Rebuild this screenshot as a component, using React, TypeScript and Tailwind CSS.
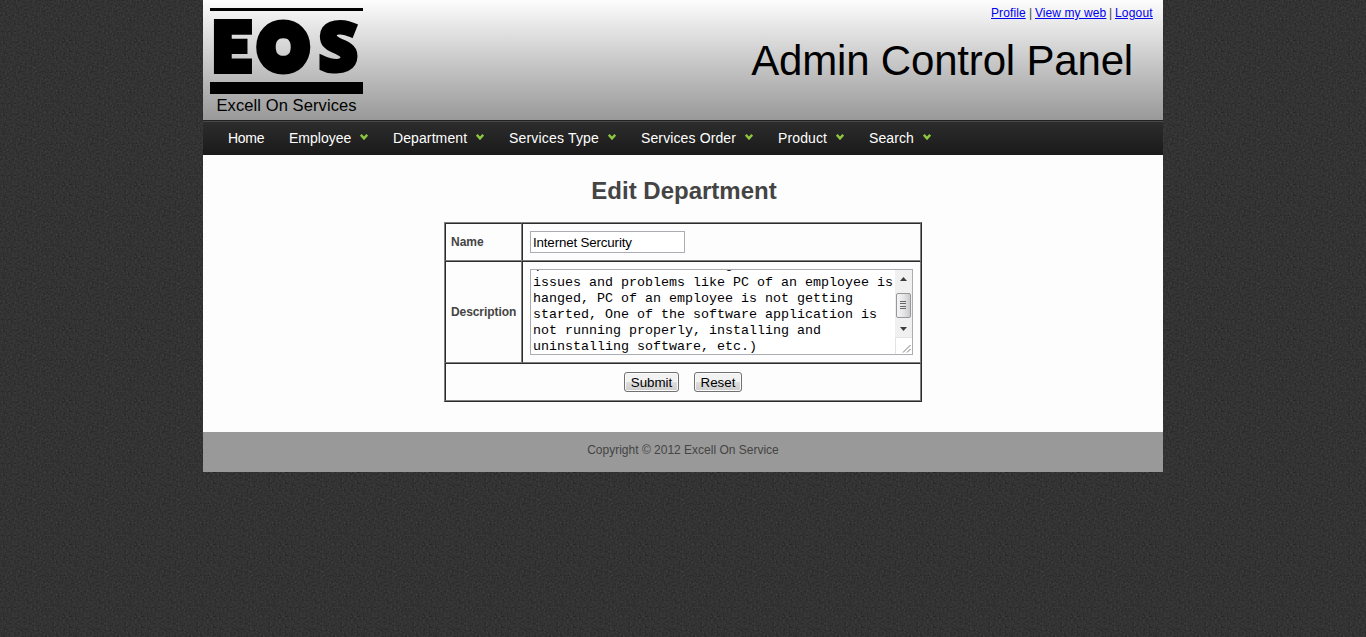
import React from "react";

const menu = [
  { label: "Home", width: "w-[36px]", spacing: "tracking-[-0.3px]", sub: false },
  { label: "Employee", width: "w-[79px]", spacing: "", sub: true },
  { label: "Department", width: "w-[91px]", spacing: "tracking-[0.1px]", sub: true },
  { label: "Services Type", width: "w-[107px]", spacing: "tracking-[0.18px]", sub: true },
  { label: "Services Order", width: "w-[112px]", spacing: "tracking-[0.12px]", sub: true },
  { label: "Product", width: "w-[66px]", spacing: "tracking-[0.12px]", sub: true },
  { label: "Search", width: "w-[62px]", spacing: "tracking-[0.1px]", sub: true },
];

const description = [
  "(It is used for resolving technical",
  "issues and problems like PC of an employee is",
  "hanged, PC of an employee is not getting",
  "started, One of the software application is",
  "not running properly, installing and",
  "uninstalling software, etc.)",
];

function Texture() {
  return (
    <svg className="absolute inset-0 h-full w-full" aria-hidden="true">
      <defs>
        <filter id="grain" x="0" y="0" width="100%" height="100%" colorInterpolationFilters="sRGB">
          <feTurbulence type="fractalNoise" baseFrequency="0.55" numOctaves="2" seed="4" />
          <feColorMatrix values="0.14 0 0 0 0.13  0.14 0 0 0 0.13  0.14 0 0 0 0.13  0 0 0 0 1" />
        </filter>
        <pattern id="tile" width="72" height="72" patternUnits="userSpaceOnUse">
          <rect width="72" height="72" filter="url(#grain)" />
        </pattern>
      </defs>
      <rect width="100%" height="100%" fill="url(#tile)" />
    </svg>
  );
}

function Logo() {
  return (
    <svg className="h-[120px] w-[170px] shrink-0" viewBox="0 0 170 120">
      <rect x="7" y="8" width="153" height="3" />
      <g fontFamily="Lato, sans-serif" fontWeight="900" stroke="#000">
        <text x="10" y="70" fontSize="65" strokeWidth="8">E</text>
        <text transform="translate(56.5 68.5) scale(0.96 1)" fontSize="61" strokeWidth="11">O</text>
        <text
          x="115.500"
          y="71.300"
          fontFamily="Open Sans, sans-serif"
          fontWeight="800"
          fontSize="68"
          strokeWidth="4"
        >
          S
        </text>
      </g>
      <rect x="7" y="82" width="153" height="12" />
      <text x="13.5" y="111" fontFamily="Liberation Sans, Arial, sans-serif" fontSize="16.500" textLength="140">
        Excell On Services
      </text>
    </svg>
  );
}

function Caret() {
  return (
    <svg className="mb-[3px] h-[6px] w-[8px]" viewBox="0 0 8 6">
      <path d="M0.8 0.8 L4 4.4 L7.2 0.8" fill="none" stroke="#8dc63f" strokeWidth="2.4" />
    </svg>
  );
}

function Scrollbar() {
  return (
    <div className="flex h-full w-[17px] shrink-0 flex-col">
      <svg className="h-[84px] w-[17px]" viewBox="0 0 17 84">
        <defs>
          <linearGradient id="thumb">
            <stop offset="0" stopColor="#f5f5f5" />
            <stop offset="0.5" stopColor="#e6e6e8" />
            <stop offset="1" stopColor="#c8c8cc" />
          </linearGradient>
        </defs>
        <rect width="17" height="67" fill="#f0f0f0" />
        <path d="M0.5 67V84M0 67.5H17" stroke="#e3e3e3" />
        <path d="M5 11L8.5 7L12 11Z" fill="#3c3c3c" />
        <path d="M5 57L8.5 61L12 57Z" fill="#3c3c3c" />
        <rect x="1.5" y="23.500" width="14" height="24" rx="1.500" fill="url(#thumb)" stroke="#979797" />
        <path d="M5 31.500H11M5 33.500H11M5 36.500H11M5 38.500H11" stroke="#666" />
        <path d="M8 82.500L15.500 75M12 82.500L15.500 79" stroke="#777" />
      </svg>
    </div>
  );
}

function FormButton({ label, width }: { label: string; width: string }) {
  return (
    <button
      className={`${width} h-[20px] rounded-[3px] border border-[#707070] bg-linear-to-b from-[#f2f2f2] from-50% via-[#dddddd] via-50% to-[#cfcfcf] pt-px text-[13.333px] leading-[18px] text-black shadow-[inset_0_0_0_1px_#fafafa]`}
    >
      {label}
    </button>
  );
}

const cell = "flex items-center border border-t-[#2c2c2c] border-l-[#2c2c2c] border-r-[#808080] border-b-[#808080]";

export default function App() {
  return (
    <div className="relative h-[637px] overflow-hidden bg-[#333333] font-['Liberation_Sans',Arial,sans-serif] text-[12px] text-[#444444]">
      <Texture />
      <div className="relative mx-auto w-[960px] bg-[#fdfdfd]">
        <header className="flex h-[120px] justify-between bg-linear-to-b from-[#fdfdfd] to-[#999999] text-black">
          <Logo />
          <div className="flex flex-col items-end">
            <div className="mt-[6px] mr-[10px] flex h-[14px] gap-[3px] leading-[14px]">
              <a href="#" className="w-[35px] tracking-[0.1px] whitespace-nowrap text-[#0000ee] underline">Profile</a>
              <span className="w-[3px] text-[#444444]">|</span>
              <a href="#" className="w-[71px] tracking-[0.08px] whitespace-nowrap text-[#0000ee] underline">View my web</a>
              <span className="w-[3px] text-[#444444]">|</span>
              <a href="#" className="w-[38px] tracking-[0.2px] whitespace-nowrap text-[#0000ee] underline">Logout</a>
            </div>
            <div className="mt-[17px] mr-[30px] text-[42px] leading-[48px] tracking-[-0.18px]">Admin Control Panel</div>
          </div>
        </header>
        <nav className="h-[35px] border-t border-[#222222] bg-linear-to-b from-[#2d2d2d] to-[#1a1a1a] text-[14px] text-white shadow-[inset_0_1px_0_#484848]">
          <ul className="flex h-[34px] gap-[25px] pl-[25px]">
            {menu.map((m) => (
              <li key={m.label} className={`${m.width} ${m.spacing} flex items-center justify-between whitespace-nowrap`}>
                <span>{m.label}</span>
                {m.sub && <Caret />}
              </li>
            ))}
          </ul>
        </nav>
        <main className="flex h-[277px] flex-col items-center">
          <h1 className="mt-[22px] h-[28px] pl-[2px] text-[24px] leading-[28px] font-bold">Edit Department</h1>
          <form
            className="mt-[17px] grid h-[180px] w-[478px] grid-cols-[77px_399px] grid-rows-[38px_102px_38px] border border-t-[#808080] border-r-[#2c2c2c] border-b-[#2c2c2c] border-l-[#808080]"
            onSubmit={(e) => e.preventDefault()}
          >
            <div className={`${cell} pl-[5px] font-bold`}>Name</div>
            <div className={`${cell} pl-[7px]`}>
              <input
                className="h-[22px] w-[155px] border border-[#abadb3] bg-white px-[2px] text-[13.333px] tracking-[-0.15px] text-black"
                defaultValue="Internet Sercurity"
              />
            </div>
            <div className={`${cell} pl-[5px] font-bold tracking-[-0.08px]`}>Description</div>
            <div className={`${cell} pl-[7px]`}>
              <div className="flex h-[86px] w-[383px] justify-between overflow-hidden border border-[#abadb3] bg-white">
                <div className="-mt-[13px] pl-[2px] font-['Liberation_Mono','Courier_New',monospace] text-[13.333px] leading-[16px] whitespace-pre text-black">
                  {description.map((line, i) => (
                    <div key={line} className={i === 0 ? "mb-[2px]" : ""}>{line}</div>
                  ))}
                </div>
                <Scrollbar />
              </div>
            </div>
            <div className={`${cell} col-span-2 justify-center gap-[15px]`}>
              <FormButton label="Submit" width="w-[55px]" />
              <FormButton label="Reset" width="w-[48px]" />
            </div>
          </form>
        </main>
        <footer className="flex h-[40px] items-start justify-center bg-[#999999] pt-[10px] leading-[16px]">
          Copyright © 2012 Excell On Service
        </footer>
      </div>
    </div>
  );
}
